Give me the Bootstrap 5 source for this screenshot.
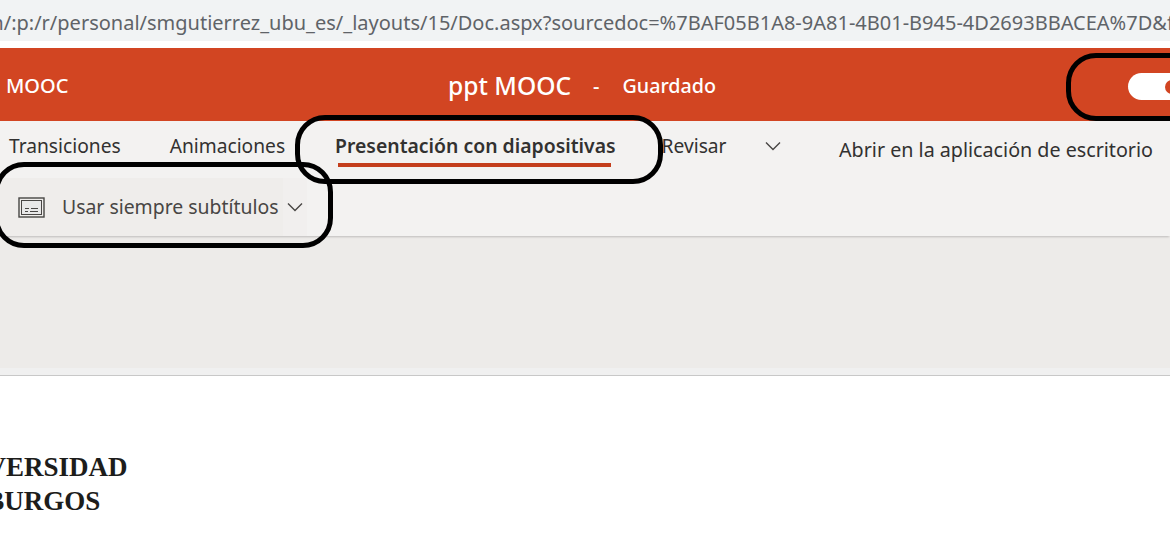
<!DOCTYPE html>
<html lang="es">
  <head>
    <meta charset="UTF-8" />
    <title>ppt MOOC</title>
    <link rel="stylesheet" href="https://cdn.jsdelivr.net/npm/bootstrap@5.3.2/dist/css/bootstrap.min.css" />
    <style>
      body {
        width: 1170px;
        height: 540px;
        overflow: hidden;
        background: #fff;
        font-family: "Noto Sans", "Open Sans", sans-serif;
        color: #323130;
        position: relative;
      }
      .url-bar {
        height: 41px;
        background: #f1f3f4;
        color: #5f6368;
        font-size: 20px;
        line-height: 45px;
        white-space: nowrap;
        overflow: hidden;
      }
      .url-text { margin-left: -15px; }
      .gap-strip { height: 7px; background: #fff; }
      .app-head {
        height: 73px;
        padding-top: 3px;
        background: #d24522;
        color: #fff;
        font-weight: 500;
      }
      .doc-short { margin-left: 6px; width: 442px; font-size: 20px; }
      .doc-title { font-size: 24.6px; }
      .doc-dash { font-size: 20px; margin: 0 22px; }
      .doc-state { font-size: 19.7px; margin-left: 1px; }
      .head-toggle {
        margin-left: auto;
        width: 42px;
        height: 27px;
        margin-top: 1px;
        padding: 7px 0 0 37px;
        background: #fff;
        border-radius: 14px 0 0 14px;
      }
      .head-toggle span {
        display: block;
        width: 14px;
        height: 14px;
        background: #d24522;
        border-radius: 50%;
      }
      .tab-row {
        height: 57px;
        background: #f3f2f1;
        font-size: 19.2px;
        white-space: nowrap;
      }
      .tab-item { padding-top: 9px; line-height: 32px; }
      .tab-first { margin-left: 9px; }
      .tab-anim { margin-left: 49px; }
      .tab-active { margin-left: 50px; font-size: 19.4px; font-weight: 600; }
      .tab-active::after {
        content: "";
        display: block;
        height: 4px;
        margin: 1px 5px 0 3px;
        background: #c43e1c;
      }
      .tab-review { margin-left: 46px; }
      .tab-chevron { margin-left: 38px; padding-top: 7px; }
      .tab-open {
        padding-top: 13px;
        line-height: 32px;
        margin-left: auto;
        margin-right: 17px;
        font-size: 19.7px;
      }
      .cmd-row {
        height: 58px;
        background: #f3f2f1;
        box-shadow: 0 2px 2px -1px rgba(0, 0, 0, .2);
        font-size: 19.4px;
        position: relative;
        white-space: nowrap;
      }
      .cmd-btn {
        width: 283px;
        background: #efedeb;
        padding-left: 18px;
        gap: 17px;
        color: #484644;
      }
      .cmd-more { width: 24px; background: #f1efee; }
      .canvas-top { height: 132px; background: #edebe9; }
      .canvas-edge { height: 8px; background: #f0f0f0; border-bottom: 1px solid #c8c8c8; }
      .uni-name {
        margin-top: 74px;
        font-family: "Liberation Serif", serif;
        font-size: 27px;
        font-weight: 700;
        line-height: 34px;
        color: #1d1d1b;
        white-space: nowrap;
      }
      .uni-top { margin-left: -63px; }
      .uni-bottom { margin-left: -58px; }
      .mark-box {
        position: absolute;
        border: 5px solid #000;
        border-radius: 30px;
        pointer-events: none;
      }
      .mark-tab { left: 295px; top: 115px; width: 368px; height: 69px; }
      .mark-cmd { left: -6px; top: 162px; width: 339px; height: 86px; }
      .mark-toggle { left: 1066px; top: 53px; width: 150px; height: 68px; }
    </style>
  </head>
  <body>
    <div class="url-bar"><div class="url-text">m/:p:/r/personal/smgutierrez_ubu_es/_layouts/15/Doc.aspx?sourcedoc=%7BAF05B1A8-9A81-4B01-B945-4D2693BBACEA%7D&amp;file</div></div>
    <div class="gap-strip"></div>

    <div class="app-head d-flex align-items-center">
      <div class="doc-short">MOOC</div>
      <div class="doc-title">ppt MOOC</div>
      <div class="doc-dash">-</div>
      <div class="doc-state">Guardado</div>
      <div class="head-toggle"><span></span></div>
    </div>

    <div class="tab-row d-flex">
      <div class="tab-item tab-first">Transiciones</div>
      <div class="tab-item tab-anim">Animaciones</div>
      <div class="tab-item tab-active">Presentación con diapositivas</div>
      <div class="tab-item tab-review">Revisar</div>
      <div class="tab-item tab-chevron">
        <svg width="16" height="10" viewBox="0 0 16 10" fill="none" stroke="#484644" stroke-width="1.4"><path d="M1 1.5l7 7 7-7" /></svg>
      </div>
      <div class="tab-open">Abrir en la aplicación de escritorio</div>
    </div>

    <div class="cmd-row d-flex">
      <div class="cmd-btn d-flex align-items-center">
        <svg width="27" height="21" viewBox="0 0 27 21" fill="none" stroke="#484644">
          <rect x="1" y="1" width="25" height="19" stroke-width="1.4" />
          <rect x="3.5" y="3.5" width="20" height="14" fill="#e8e8e8" stroke-width="1" />
          <path d="M7 11.5h4M13 11.5h7M7 14.5h3M12 14.5h8" stroke-width="1" />
        </svg>
        <span>Usar siempre subtítulos</span>
      </div>
      <div class="cmd-more d-flex align-items-center justify-content-center">
        <svg width="16" height="10" viewBox="0 0 16 10" fill="none" stroke="#484644" stroke-width="1.4"><path d="M1 1.5l7 7 7-7" /></svg>
      </div>
    </div>

    <div class="canvas-top"></div>
    <div class="canvas-edge"></div>
    <div class="uni-name">
      <div class="uni-top">UNIVERSIDAD</div>
      <div class="uni-bottom">DE BURGOS</div>
    </div>

    <div class="mark-box mark-tab"></div>
    <div class="mark-box mark-cmd"></div>
    <div class="mark-box mark-toggle"></div>

    <script src="https://cdn.jsdelivr.net/npm/bootstrap@5.3.2/dist/js/bootstrap.bundle.min.js"></script>
  </body>
</html>
